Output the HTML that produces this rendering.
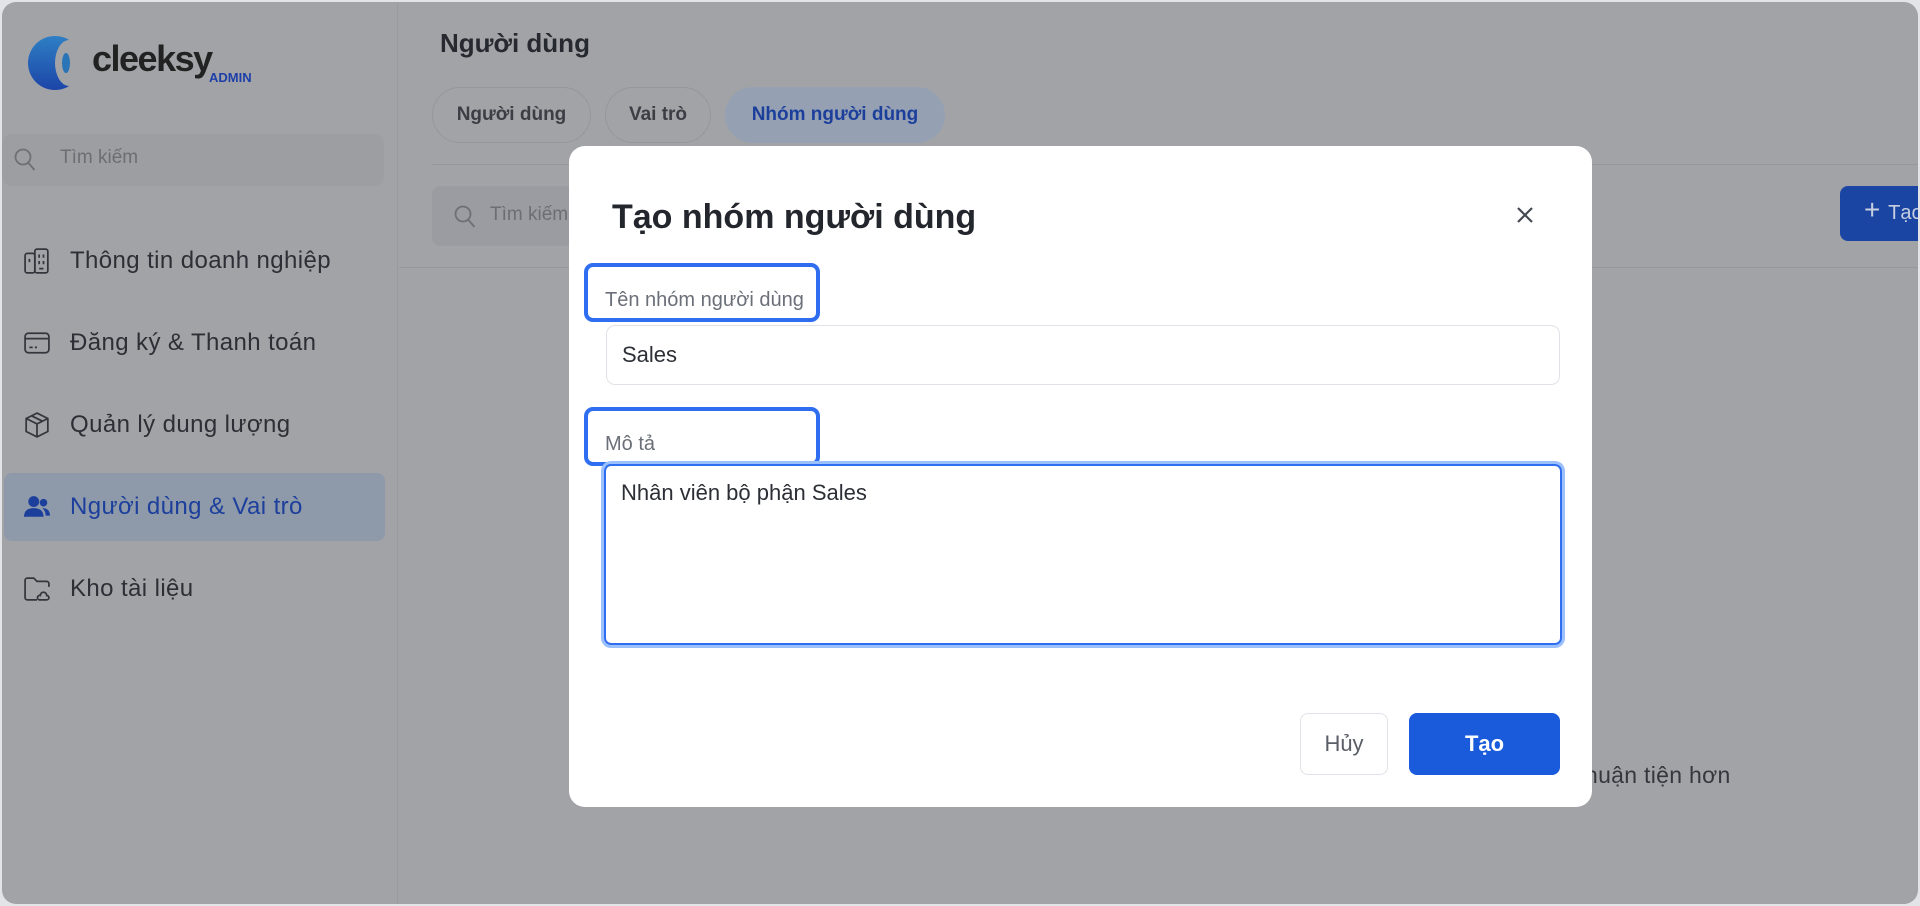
<!DOCTYPE html>
<html><head><meta charset="utf-8"><style>
*{box-sizing:border-box;margin:0;padding:0}
body{width:1920px;height:906px;overflow:hidden;background:#e3e4e8;font-family:"Liberation Sans",sans-serif;position:relative}
.frame{position:absolute;left:2px;top:2px;width:1916px;height:902px;border-radius:14px;background:#a2a3a7;overflow:hidden}
.sb{position:absolute;left:0;top:0;width:396px;height:100%;border-right:1px solid #9a9b9f}
.abs{position:absolute}
.nav{position:absolute;left:22px;font-size:24px;letter-spacing:0.4px;color:#2c2f35;display:flex;align-items:center;gap:20px}
.nav svg{width:26px;height:26px}
.tab{position:absolute;top:85px;height:56px;border:1px solid #96979b;border-radius:28px;font-size:19px;font-weight:bold;color:#3b3e45;display:flex;align-items:center;justify-content:center}
.modal{position:absolute;left:567px;top:144px;width:1023px;height:661px;background:#fff;border-radius:16px}
.lbl{position:absolute;left:15px;width:236px;height:59px;border:4px solid #2f6ef0;border-radius:9px;font-size:20px;color:#6b6f78;padding:22px 0 0 17px}
</style></head><body><div class="frame">
<div class="sb">
 <svg class="abs" style="left:25px;top:33px" width="58" height="56" viewBox="0 0 58 56"><defs><linearGradient id="g" x1="0" y1="0" x2="0" y2="1"><stop offset="0" stop-color="#2e7fc4"/><stop offset="1" stop-color="#1c45a8"/></linearGradient></defs><circle cx="28" cy="28" r="27" fill="url(#g)"/><ellipse cx="42" cy="28" rx="14" ry="23" fill="#a2a3a7"/><ellipse cx="39" cy="28" rx="4" ry="10" fill="#2a74b8"/></svg>
 <div class="abs" style="left:90px;top:36px;font-size:36px;font-weight:bold;color:#222;letter-spacing:-1.5px">cleeksy</div>
 <div class="abs" style="left:207px;top:68px;font-size:13px;font-weight:bold;color:#1d3fa8">ADMIN</div>
 <div class="abs" style="left:0;top:132px;width:382px;height:52px;background:#9d9ea2;border-radius:10px"></div>
 <svg class="abs" style="left:12px;top:146px" width="22" height="24" viewBox="0 0 22 24" fill="none" stroke="#6e7076" stroke-width="1.8"><circle cx="9" cy="9" r="7.5"/><path d="M14.5 15l6 7"/></svg>
 <div class="abs" style="left:58px;top:145px;font-size:19px;color:#6c6e74">Tìm kiếm</div>
 <div class="nav" style="top:245px"><svg viewBox="0 0 24 24" fill="none" stroke="#33363c" stroke-width="1.6"><rect x="1" y="5" width="9" height="18" rx="2"/><rect x="10" y="1" width="12" height="22" rx="2"/><path d="M5 10v3M14 6v3M18 6v3M14 12v3M18 12v3M14 19h4"/></svg>Thông tin doanh nghiệp</div>
 <div class="nav" style="top:327px"><svg viewBox="0 0 24 24" fill="none" stroke="#33363c" stroke-width="1.6"><rect x="1" y="3" width="22" height="18" rx="3"/><path d="M1 8h22M5 16h3M10 16h2"/></svg>Đăng ký &amp; Thanh toán</div>
 <div class="nav" style="top:409px"><svg viewBox="0 0 24 24" fill="none" stroke="#33363c" stroke-width="1.6"><path d="M12 1l10 5v12l-10 5-10-5V6z M2 6l10 5 10-5M12 11v12M7 3.5l10 5"/></svg>Quản lý dung lượng</div>
 <div class="abs" style="left:2px;top:471px;width:381px;height:68px;background:#8e99aa;border-radius:8px"></div>
 <div class="nav" style="top:491px;color:#1c3f9c"><svg viewBox="0 0 24 24" fill="#1c3f9c"><circle cx="9" cy="7" r="5"/><path d="M0 21c0-6 4-8 9-8s9 2 9 8z"/><circle cx="18" cy="8" r="3.5"/><path d="M17 13c4 0 7 2 7 7h-4c0-3-1-5-3-7z"/></svg>Người dùng &amp; Vai trò</div>
 <div class="nav" style="top:573px"><svg viewBox="0 0 24 24" fill="none" stroke="#33363c" stroke-width="1.6"><path d="M1 4a2 2 0 012-2h6l3 3h9a2 2 0 012 2v3M12 22H3a2 2 0 01-2-2V4"/><path d="M14 22h7a2 2 0 000-4 3 3 0 00-6 0 2 2 0 00-1 4z"/></svg>Kho tài liệu</div>
</div>
<div class="abs" style="left:438px;top:26px;font-size:26px;font-weight:bold;color:#26292f">Người dùng</div>
<div class="tab" style="left:430px;width:159px">Người dùng</div>
<div class="tab" style="left:603px;width:106px">Vai trò</div>
<div class="tab" style="left:723px;width:220px;background:#95a1b3;border-color:#95a1b3;color:#1c3f9c">Nhóm người dùng</div>
<div class="abs" style="left:430px;top:162px;width:1500px;height:1px;background:#96979b"></div>
<div class="abs" style="left:430px;top:184px;width:300px;height:60px;background:#9a9ca1;border-radius:8px"></div>
<svg class="abs" style="left:452px;top:203px" width="22" height="24" viewBox="0 0 22 24" fill="none" stroke="#6e7076" stroke-width="1.8"><circle cx="9" cy="9" r="7.5"/><path d="M14.5 15l6 7"/></svg>
<div class="abs" style="left:488px;top:202px;font-size:19px;color:#6c6e74">Tìm kiếm</div>
<div class="abs" style="left:1838px;top:184px;width:90px;height:55px;background:#1a45a3;border-radius:8px;color:#c8cfe0;font-size:28px;padding:8px 0 0 24px">+ <span style="font-size:20px">Tạo</span></div>
<div class="abs" style="left:397px;top:265px;width:1530px;height:1px;background:#96979b"></div>
<div class="abs" style="left:1583px;top:760px;font-size:23px;letter-spacing:0.3px;color:#34373d">huận tiện hơn</div>
<div class="modal">
 <div class="abs" style="left:43px;top:52px;font-size:34px;font-weight:bold;color:#23262c">Tạo nhóm người dùng</div>
 <svg class="abs" style="left:947px;top:60px" width="18" height="18" viewBox="0 0 18 18" stroke="#444850" stroke-width="2.2"><path d="M2 2l14 14M16 2L2 16"/></svg>
 <div class="lbl" style="top:117px">Tên nhóm người dùng</div>
 <div class="abs" style="left:37px;top:179px;width:954px;height:60px;border:1.5px solid #e0e2e7;border-radius:9px;font-size:22px;color:#2c2f35;padding:16px 0 0 15px">Sales</div>
 <div class="lbl" style="top:261px">Mô tả</div>
 <div class="abs" style="left:35px;top:318px;width:958px;height:181px;border:2px solid #2f6ef0;box-shadow:0 0 0 3px #9cc0fb;border-radius:7px;font-size:22px;color:#2c2f35;padding:14px 0 0 15px">Nhân viên bộ phận Sales</div>
 <div class="abs" style="left:731px;top:567px;width:88px;height:62px;border:1.5px solid #e0e2e7;border-radius:8px;font-size:22px;color:#5a5e66;text-align:center;line-height:60px">Hủy</div>
 <div class="abs" style="left:840px;top:567px;width:151px;height:62px;background:#1a5bdc;border-radius:8px;font-size:22px;font-weight:bold;color:#fff;text-align:center;line-height:62px">Tạo</div>
</div>
</div></body></html>
